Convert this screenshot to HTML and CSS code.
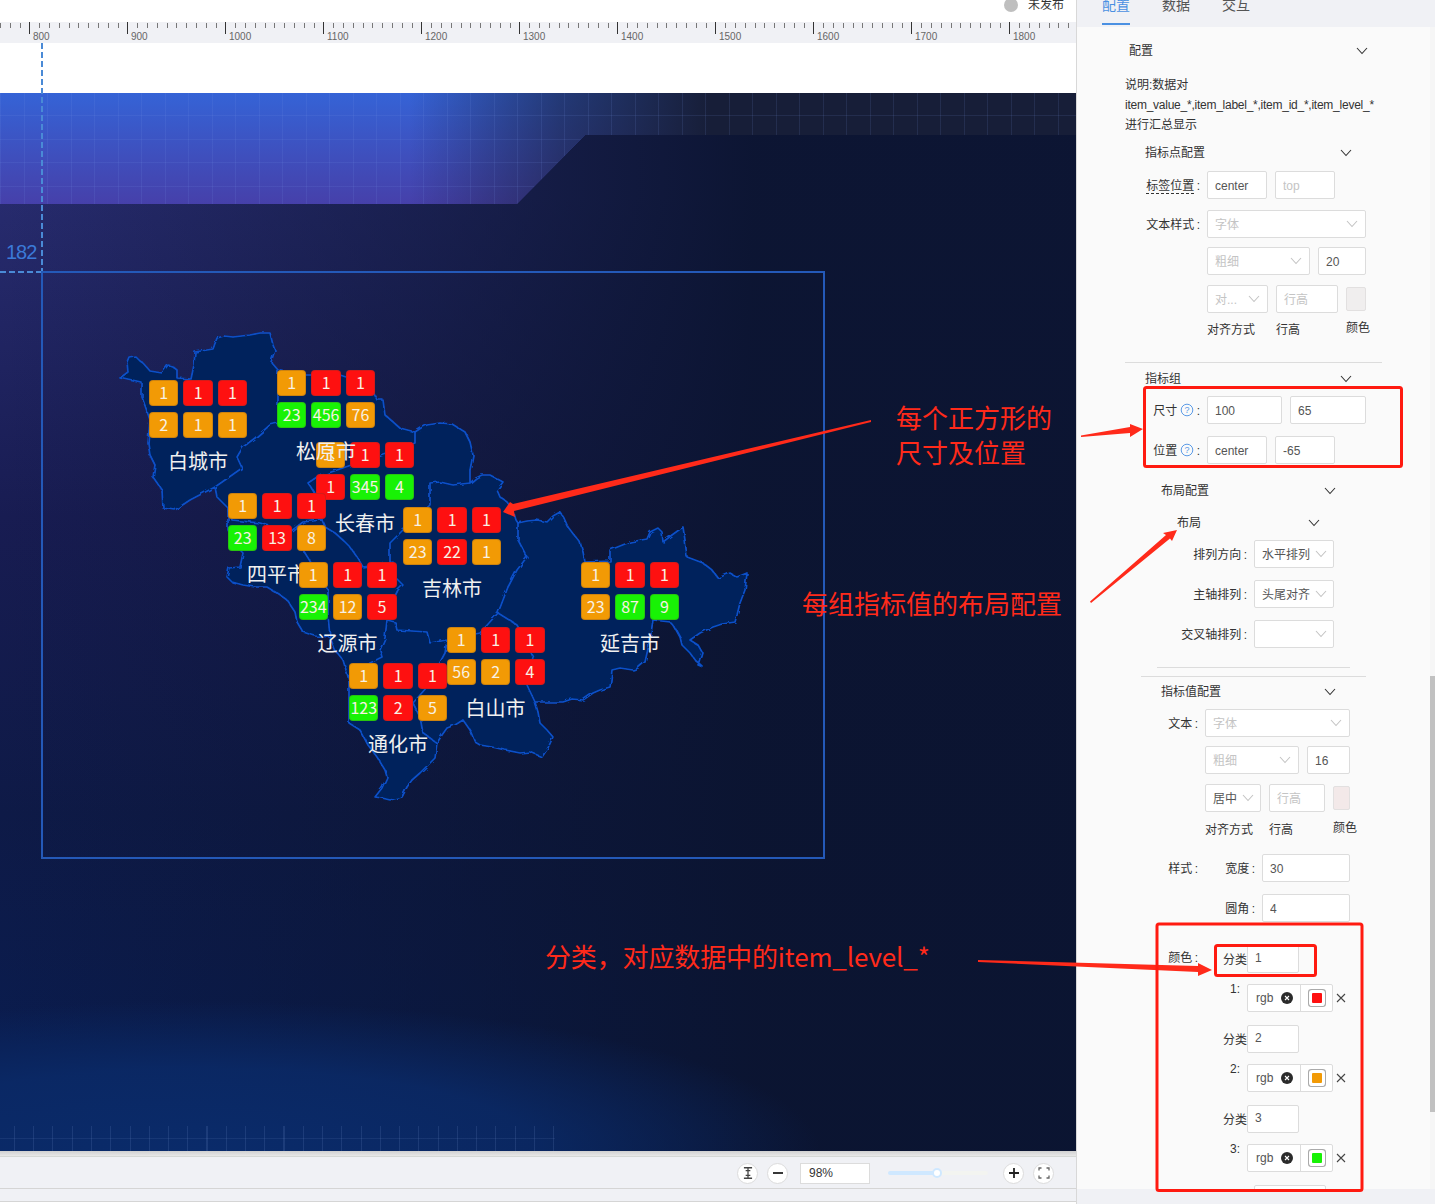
FILE: index.html
```html
<!DOCTYPE html>
<html lang="zh-CN">
<head>
    <meta charset="UTF-8">
    <title>大屏配置</title>
    <link rel="stylesheet" href="styles.css">
</head>
<body>

<svg width="0" height="0" class="defs">
    <defs>
        <symbol id="chev" viewBox="0 0 12 8"><polyline points="1,1 6,6.5 11,1" fill="none" stroke="currentColor" stroke-width="1.1"/></symbol>
        <symbol id="help" viewBox="0 0 14 14"><circle cx="7" cy="7" r="5.8" fill="none" stroke="#5b9be6" stroke-width="1"/><text x="7" y="10" text-anchor="middle" font-size="9" fill="#5b9be6">?</text></symbol>
        <symbol id="clear" viewBox="0 0 12 12"><circle cx="6" cy="6" r="6" fill="#2b2b2b"/><path d="M4 4l4 4M8 4l-4 4" stroke="#fff" stroke-width="1.1"/></symbol>
        <symbol id="close" viewBox="0 0 10 10"><path d="M1 1l8 8M9 1l-8 8" stroke="#444" stroke-width="1.1"/></symbol>
        <filter id="rough" x="-5%" y="-5%" width="110%" height="110%">
            <feTurbulence type="fractalNoise" baseFrequency="0.13" numOctaves="2" seed="4"/>
            <feDisplacementMap in="SourceGraphic" scale="4"/>
        </filter>
    </defs>
</svg>

<div class="main">
    <div class="topbar">
        <span class="status-dot"></span>
        <span class="status-text">未发布</span>
    </div>

    <div class="ruler">
        <div class="mark">800</div>
        <div class="mark">900</div>
        <div class="mark">1000</div>
        <div class="mark">1100</div>
        <div class="mark">1200</div>
        <div class="mark">1300</div>
        <div class="mark">1400</div>
        <div class="mark">1500</div>
        <div class="mark">1600</div>
        <div class="mark">1700</div>
        <div class="mark">1800</div>
    </div>

    <div class="gutter"></div>

    <div class="canvas">
        <div class="banner"></div>
        <div class="floor-grid"></div>

        <div class="guide-v"></div>
        <div class="guide-h"></div>
        <div class="guide-num">182</div>
        <div class="frame"></div>

        <!-- 地图轮廓 -->
        <svg class="map" width="1076" height="1058" viewBox="0 93 1076 1058">
            <g filter="url(#rough)">
            <path class="map-area" d="M120,378 L128,372 L127,362 L129,357 L135,356 L140,361 L143,363 L150,371 L162,373 L168,365 L172,366 L177,370 L177,378 L191,379 L194,365 L195,352 L213,349 L217,338 L224,336 L233,337 L250,335 L260,333 L270,333 L273,345 L275,350 L271,362 L278,370 L300,375 L340,375 L370,385 L377,400 L383,400 L385,415 L392,421 L400,428 L415,432 L421,428 L427,425 L440,423 L452,424 L465,432 L470,442 L473,455 L470,470 L470,483 L476,478 L482,475 L490,475 L503,482 L497,490 L500,497 L507,502 L513,510 L516,520 L518,523 L527,521 L537,520 L547,522 L553,516 L560,512 L564,518 L568,527 L574,535 L580,542 L583,552 L585,562 L610,561 L610,550 L630,542 L647,539 L650,532 L658,528 L662,532 L663,542 L672,535 L683,527 L685,540 L687,557 L703,563 L712,570 L718,578 L730,573 L737,577 L747,573 L745,590 L740,603 L737,615 L735,622 L722,624 L713,627 L700,633 L690,640 L698,645 L702,652 L698,665 L703,667 L695,660 L690,653 L682,645 L680,637 L675,628 L670,622 L653,620 L650,640 L645,662 L638,668 L633,670 L620,668 L612,670 L611,680 L610,687 L600,690 L593,693 L583,700 L572,699 L563,702 L535,702 L538,712 L540,723 L547,730 L553,737 L548,748 L542,757 L530,752 L520,753 L505,750 L492,747 L480,745 L475,742 L470,730 L463,720 L455,725 L447,728 L442,735 L437,743 L435,758 L428,765 L420,773 L412,780 L407,787 L402,797 L390,800 L382,798 L375,797 L382,788 L387,777 L385,770 L377,757 L368,745 L360,730 L349,723 L349,680 L343,660 L335,650 L330,637 L315,636 L303,632 L297,622 L295,612 L287,600 L280,595 L267,587 L255,587 L243,585 L232,582 L227,577 L229,568 L240,567 L243,553 L235,545 L228,530 L228,508 L217,497 L215,487 L190,500 L175,510 L163,508 L162,490 L153,477 L155,465 L150,455 L148,443 L150,420 L142,397 L142,383 Z"/>
            <path class="map-line" d="M278,370 L278,423 L270,425 L255,438 L243,447 L237,457 L242,468 L225,480 L215,487 M228,508 L232,520 L260,523 L290,532 L303,522 L322,520 L325,527 L335,533 L343,540 L350,547 L357,557 L363,567 L393,562 L395,577 L403,585 L398,590 L388,610 L387,620 L395,622 L397,630 L427,632 L430,643 L447,640 L480,633 L498,613 L503,600 L508,587 L517,570 L527,557 L518,540 L518,523 M415,432 L415,443 L380,455 L317,477 L308,483 L313,490 L322,505 L322,520 M470,483 L453,485 L440,482 L430,483 L430,505 L403,530 L390,543 L390,562 M300,545 L328,590 L328,615 L330,637 M387,620 L385,638 L380,650 L382,657 L370,663 L349,680 M447,640 L445,653 L427,687 L413,703 L420,717 L423,733 L437,743 M498,613 L517,625 L525,640 L533,657 L530,672 L527,685 L535,702"/>
            </g>
        </svg>

        <div class="pin pin-baicheng">
            <div class="cells">
                <span class="cell orange">1</span><span class="cell red">1</span><span class="cell red">1</span>
                <span class="cell orange">2</span><span class="cell orange">1</span><span class="cell orange">1</span>
            </div>
            <div class="pin-name">白城市</div>
        </div>
        <div class="pin pin-changchun">
            <div class="cells">
                <span class="cell orange">1</span><span class="cell red">1</span><span class="cell red">1</span>
                <span class="cell red">1</span><span class="cell green">345</span><span class="cell green">4</span>
            </div>
            <div class="pin-name">长春市</div>
        </div>
        <div class="pin pin-songyuan">
            <div class="cells">
                <span class="cell orange">1</span><span class="cell red">1</span><span class="cell red">1</span>
                <span class="cell green">23</span><span class="cell green">456</span><span class="cell orange">76</span>
            </div>
            <div class="pin-name">松原市</div>
        </div>
        <div class="pin pin-siping">
            <div class="cells">
                <span class="cell orange">1</span><span class="cell red">1</span><span class="cell red">1</span>
                <span class="cell green">23</span><span class="cell red">13</span><span class="cell orange">8</span>
            </div>
            <div class="pin-name">四平市</div>
        </div>
        <div class="pin pin-jilin">
            <div class="cells">
                <span class="cell orange">1</span><span class="cell red">1</span><span class="cell red">1</span>
                <span class="cell orange">23</span><span class="cell red">22</span><span class="cell orange">1</span>
            </div>
            <div class="pin-name">吉林市</div>
        </div>
        <div class="pin pin-liaoyuan">
            <div class="cells">
                <span class="cell orange">1</span><span class="cell red">1</span><span class="cell red">1</span>
                <span class="cell green">234</span><span class="cell orange">12</span><span class="cell red">5</span>
            </div>
            <div class="pin-name">辽源市</div>
        </div>
        <div class="pin pin-tonghua">
            <div class="cells">
                <span class="cell orange">1</span><span class="cell red">1</span><span class="cell red">1</span>
                <span class="cell green">123</span><span class="cell red">2</span><span class="cell orange">5</span>
            </div>
            <div class="pin-name">通化市</div>
        </div>
        <div class="pin pin-baishan">
            <div class="cells">
                <span class="cell orange">1</span><span class="cell red">1</span><span class="cell red">1</span>
                <span class="cell orange">56</span><span class="cell orange">2</span><span class="cell red">4</span>
            </div>
            <div class="pin-name">白山市</div>
        </div>
        <div class="pin pin-yanji">
            <div class="cells">
                <span class="cell orange">1</span><span class="cell red">1</span><span class="cell red">1</span>
                <span class="cell orange">23</span><span class="cell green">87</span><span class="cell green">9</span>
            </div>
            <div class="pin-name">延吉市</div>
        </div>

        <div class="note-red note-size">每个正方形的<br>尺寸及位置</div>
        <div class="note-red note-layout">每组指标值的布局配置</div>
        <div class="note-red note-level">分类，对应数据中的item_level_*</div>
    </div>

    <div class="canvas-shadow"></div>

    <div class="statusbar">
        <span class="round-btn">
            <svg width="14" height="14" viewBox="0 0 12 12"><path d="M2.5 1.5h7M2.5 10.5h7M6 1.5v9M4 4h4M4 8h4" stroke="#444" stroke-width="1.1" fill="none"/></svg>
        </span>
        <span class="round-btn btn-minus">
            <svg width="12" height="12" viewBox="0 0 12 12"><path d="M1 6h10" stroke="#222" stroke-width="1.8"/></svg>
        </span>
        <span class="zoom-value">98%</span>
        <span class="slider"><span class="slider-fill"></span><span class="slider-thumb"></span></span>
        <span class="round-btn btn-plus">
            <svg width="12" height="12" viewBox="0 0 12 12"><path d="M1 6h10M6 1v10" stroke="#222" stroke-width="1.8"/></svg>
        </span>
        <span class="round-btn btn-full">
            <svg width="12" height="12" viewBox="0 0 12 12"><path d="M1 3.5V1h2.5M8.5 1H11v2.5M11 8.5V11H8.5M3.5 11H1V8.5" stroke="#666" stroke-width="1.3" fill="none"/></svg>
        </span>
    </div>
    <div class="footbar"></div>
</div>

<div class="panel">
    <div class="tabs">
        <span class="tab active">配置</span>
        <span class="tab">数据</span>
        <span class="tab">交互</span>
    </div>

    <div class="panel-body">
        <div class="coll-head"><span>配置</span><svg class="chev"><use href="#chev"/></svg></div>
        <div class="explain">说明:数据对<br><span class="keys">item_value_*,item_label_*,item_id_*,item_level_*</span><br>进行汇总显示</div>

        <!-- 指标点配置 -->
        <div class="coll mt-6">
            <div class="coll-head"><span>指标点配置</span><svg class="chev"><use href="#chev"/></svg></div>
            <div class="row mt-8">
                <label class="row-label w66"><span class="dashed">标签位置</span>&#8201;:</label>
                <input class="field w60" value="center">
                <input class="field w60" placeholder="top">
            </div>
            <div class="row mt-11">
                <label class="row-label w66">文本样式&#8201;:</label>
                <div class="select w159 dim">字体<svg class="chev-s"><use href="#chev"/></svg></div>
            </div>
            <div class="row mt-9">
                <div class="spacer w66"></div>
                <div class="select w103 dim">粗细<svg class="chev-s"><use href="#chev"/></svg></div>
                <input class="field w48" value="20">
            </div>
            <div class="row mt-10">
                <div class="spacer w66"></div>
                <div class="select w61 dim">对...<svg class="chev-s"><use href="#chev"/></svg></div>
                <input class="field w62" placeholder="行高">
                <span class="swatch"></span>
            </div>
            <div class="captions mt-8">
                <div class="w66"></div>
                <span class="w69">对齐方式</span><span class="w70">行高</span><span class="cap-up">颜色</span>
            </div>
        </div>

        <div class="divider mt-25"></div>

        <!-- 指标组 -->
        <div class="coll mt-4">
            <div class="coll-head"><span>指标组</span><svg class="chev"><use href="#chev"/></svg></div>
            <div class="row mt-7">
                <label class="row-label w66">尺寸<svg class="help"><use href="#help"/></svg>&#8201;:</label>
                <input class="field w75" value="100">
                <input class="field w76" value="65">
            </div>
            <div class="row mt-12">
                <label class="row-label w66">位置<svg class="help"><use href="#help"/></svg>&#8201;:</label>
                <input class="field w60" value="center">
                <input class="field w60" value="-65">
            </div>

            <div class="coll mt-15">
                <div class="coll-head"><span>布局配置</span><svg class="chev"><use href="#chev"/></svg></div>
                <div class="coll mt-10">
                    <div class="coll-head"><span>布局</span><svg class="chev"><use href="#chev"/></svg></div>
                    <div class="row mt-7">
                        <label class="row-label w81">排列方向&#8201;:</label>
                        <div class="select w80 on">水平排列<svg class="chev-s tight"><use href="#chev"/></svg></div>
                    </div>
                    <div class="row mt-12">
                        <label class="row-label w81">主轴排列&#8201;:</label>
                        <div class="select w80 on">头尾对齐<svg class="chev-s tight"><use href="#chev"/></svg></div>
                    </div>
                    <div class="row mt-12">
                        <label class="row-label w81">交叉轴排列&#8201;:</label>
                        <div class="select w80"><svg class="chev-s tight"><use href="#chev"/></svg></div>
                    </div>
                </div>
                <div class="divider mt-19"></div>
            </div>
            <div class="divider mt-8"></div>
        </div>

        <!-- 指标值配置 -->
        <div class="coll">
            <div class="coll mt-3">
                <div class="coll-head"><span>指标值配置</span><svg class="chev"><use href="#chev"/></svg></div>
                <div class="row mt-7">
                    <label class="row-label w48">文本&#8201;:</label>
                    <div class="select w145 dim">字体<svg class="chev-s"><use href="#chev"/></svg></div>
                </div>
                <div class="row mt-9">
                    <div class="spacer w48"></div>
                    <div class="select w94 dim">粗细<svg class="chev-s"><use href="#chev"/></svg></div>
                    <input class="field w43" value="16">
                </div>
                <div class="row mt-10">
                    <div class="spacer w48"></div>
                    <div class="select w56 on">居中<svg class="chev-s tight"><use href="#chev"/></svg></div>
                    <input class="field w56" placeholder="行高">
                    <span class="swatch pink"></span>
                </div>
                <div class="captions mt-9">
                    <div class="w48"></div>
                    <span class="w64">对齐方式</span><span class="w64">行高</span><span class="cap-up">颜色</span>
                </div>
                <div class="row mt-17">
                    <label class="row-label w48">样式&#8201;:</label>
                    <label class="row-label w57">宽度&#8201;:</label>
                    <input class="field w88" value="30">
                </div>
                <div class="row mt-12">
                    <label class="row-label w105">圆角&#8201;:</label>
                    <input class="field w88" value="4">
                </div>
                <div class="color-block mt-23">
                    <label class="row-label w48">颜色&#8201;:</label>
                    <div class="color-list">
                        <div class="level-row">
                            <span class="level-name">分类</span><input class="field w52" value="1">
                        </div>
                        <div class="level-row mt-11">
                            <span class="level-no">1:</span>
                            <div class="color-pick">
                                <span class="color-text">rgb</span><svg class="clear"><use href="#clear"/></svg>
                                <span class="color-box"><i class="red"></i></span>
                            </div>
                            <svg class="remove"><use href="#close"/></svg>
                        </div>
                        <div class="level-row mt-13">
                            <span class="level-name">分类</span><input class="field w52" value="2">
                        </div>
                        <div class="level-row mt-11">
                            <span class="level-no">2:</span>
                            <div class="color-pick">
                                <span class="color-text">rgb</span><svg class="clear"><use href="#clear"/></svg>
                                <span class="color-box"><i class="orange"></i></span>
                            </div>
                            <svg class="remove"><use href="#close"/></svg>
                        </div>
                        <div class="level-row mt-13">
                            <span class="level-name">分类</span><input class="field w52" value="3">
                        </div>
                        <div class="level-row mt-11">
                            <span class="level-no">3:</span>
                            <div class="color-pick">
                                <span class="color-text">rgb</span><svg class="clear"><use href="#clear"/></svg>
                                <span class="color-box"><i class="green"></i></span>
                            </div>
                            <svg class="remove"><use href="#close"/></svg>
                        </div>
                        <div class="level-add mt-13"></div>
                    </div>
                </div>
            </div>
        </div>
    </div>
</div>

<!-- 标注层 -->
<svg class="marks" width="1435" height="1204" viewBox="0 0 1435 1204">
    <polygon points="871,420 513,504 510,502 503,512 515,517 514,511 871,422"/>
    <polygon points="1081,435.5 1130,427 1130,424 1143,429 1130,437 1130,433 1081,437"/>
    <polygon points="1090,601.5 1166,535 1163,533 1177,530 1172,541 1170,538.5 1091,603"/>
    <polygon points="978,960 1198,966 1198,963 1212,970 1198,976 1198,972 978,962"/>
    <rect x="1144.5" y="387.5" width="257" height="79" rx="2"/>
    <rect x="1157" y="924" width="205" height="266.5" rx="2"/>
    <rect x="1215.5" y="945.5" width="100" height="30" rx="2"/>
</svg>

</body>
</html>
```

FILE: styles.css
```css
/* 页面框架 */
* { box-sizing: border-box; }

body {
    position: relative;
    display: flex;
    width: 1435px;
    height: 1204px;
    margin: 0;
    overflow: hidden;
    background: #fff;
    font-family: "Liberation Sans", "Noto Sans CJK SC", sans-serif;
    font-size: 12px;
    color: #333;
}
.defs { position: absolute; }

.main {
    display: flex;
    flex-direction: column;
    width: 1077px;
    height: 1204px;
    border-right: 1px solid #d8d8d8;
}

.topbar {
    display: flex;
    justify-content: flex-end;
    align-items: center;
    height: 22px;
    padding: 0 12px 12px 0;
    overflow: hidden;
}
.status-dot {
    width: 14px;
    height: 14px;
    margin-right: 10px;
    border-radius: 50%;
    background: #bfbfbf;
}
.status-text { line-height: 10px; }

/* 标尺 */
.ruler {
    display: flex;
    height: 21px;
    padding-left: 29px;
    background-color: #f0f1f5;
    background-image: repeating-linear-gradient(90deg, #777 0, #777 1px, transparent 1px, transparent 9.8px);
    background-size: 100% 5px;
    background-position: 0 1px;
    background-repeat: no-repeat;
}
.mark {
    flex: 0 0 98px;
    height: 12px;
    padding: 9px 0 0 3px;
    border-left: 1px solid #333;
    font-size: 10px;
    line-height: 12px;
    color: #666;
    overflow: visible;
}
.gutter { height: 50px; background: #fff; }

/* 画布 */
.canvas {
    position: relative;
    height: 1058px;
    background:
        radial-gradient(ellipse 620px 150px at 200px 100%, #0a2b6a 0%, rgba(10,43,106,.8) 55%, rgba(10,43,106,0) 100%),
        linear-gradient(90deg, rgba(11,20,48,0) 0%, rgba(11,20,48,.5) 40%, rgba(11,20,48,.95) 70%),
        linear-gradient(180deg, #272b6e 10%, #181c52 40%, #0e1a47 68%, #0a1c4e 90%);
}
.banner {
    position: absolute;
    left: 0;
    top: 0;
    width: 1076px;
    height: 111px;
    clip-path: polygon(0 0, 100% 0, 100% 42px, 585px 42px, 517px 100%, 0 100%);
    background:
        repeating-linear-gradient(90deg, rgba(120,150,230,.13) 0, rgba(120,150,230,.13) 1px, transparent 1px, transparent 23.5px),
        repeating-linear-gradient(180deg, transparent 0, transparent 22px, rgba(120,150,230,.12) 22px, rgba(120,150,230,.12) 23px, transparent 23px, transparent 23.5px),
        linear-gradient(90deg, rgba(23,30,56,0) 38%, rgba(23,30,56,.6) 52%, #171e38 66%),
        linear-gradient(180deg, #3563d6, #4640aa);
}
.floor-grid {
    position: absolute;
    left: 0;
    bottom: 0;
    width: 555px;
    height: 25px;
    background:
        linear-gradient(180deg, transparent 12px, rgba(140,170,230,.1) 12px, rgba(140,170,230,.1) 13px, transparent 13px),
        repeating-linear-gradient(90deg, transparent 0, transparent 14px, rgba(140,170,230,.14) 14px, rgba(140,170,230,.14) 15px, transparent 15px, transparent 19.25px);
}

.guide-v {
    position: absolute;
    left: 41px;
    top: -50px;
    width: 1.5px;
    height: 228px;
    background: repeating-linear-gradient(180deg, #4a8ad6 0, #4a8ad6 6px, transparent 6px, transparent 9px);
}
.guide-h {
    position: absolute;
    left: 0;
    top: 178px;
    width: 41px;
    height: 1.5px;
    background: repeating-linear-gradient(90deg, #4a8ad6 0, #4a8ad6 6px, transparent 6px, transparent 9px);
}
.guide-num {
    position: absolute;
    left: 6px;
    top: 147px;
    font-size: 20px;
    line-height: 24px;
    letter-spacing: -1px;
    color: #3b7ad8;
}
.frame {
    position: absolute;
    left: 41px;
    top: 178px;
    width: 784px;
    height: 588px;
    border: 2px solid #2459b8;
}

.map { position: absolute; left: 0; top: 0; }
.map-area { fill: #01215c; stroke: #0a50c8; stroke-width: 1.7; stroke-linejoin: round; }
.map-line { fill: none; stroke: #0a50c8; stroke-width: 1.7; stroke-linejoin: round; }

/* 指标组 */
.pin { position: absolute; width: 98px; font-family: "Noto Sans CJK SC", sans-serif; }
.pin-baicheng { left: 149px; top: 287px; }
.pin-songyuan { left: 277px; top: 277px; }
.pin-changchun { left: 316px; top: 349px; }
.pin-siping { left: 228px; top: 400px; }
.pin-jilin { left: 403px; top: 414px; }
.pin-liaoyuan { left: 298.5px; top: 469px; }
.pin-yanji { left: 581px; top: 469px; }
.pin-baishan { left: 446.5px; top: 534px; }
.pin-tonghua { left: 349px; top: 570px; }

.cells {
    display: grid;
    grid-template-columns: repeat(3, 29.4px);
    grid-auto-rows: 26px;
    column-gap: 5px;
    row-gap: 6px;
}
.cell {
    border: 1px solid rgba(90,60,50,.25);
    border-radius: 4px;
    font-size: 16px;
    line-height: 22px;
    text-align: center;
    color: #f8f1e4;
}
.orange { background: #f29a05; }
.red { background: #fe1010; }
.green { background: #18f205; }
.pin-name {
    margin: 11px -20px 0;
    font-size: 20px;
    line-height: 24px;
    text-align: center;
    color: #f0f0f0;
}

/* 红色标注 */
.note-red {
    position: absolute;
    font-family: "Noto Sans CJK SC", sans-serif;
    font-size: 26px;
    line-height: 35px;
    white-space: nowrap;
    color: #ff2a1a;
}
.note-size { left: 896px; top: 306px; }
.note-layout { left: 802px; top: 492px; }
.note-level { left: 545px; top: 845px; letter-spacing: -.13px; }

.marks { position: absolute; left: 0; top: 0; pointer-events: none; }
.marks polygon { fill: #ff2a1a; }
.marks rect { fill: none; stroke: #ff1a10; stroke-width: 3; }

/* 底部 */
.canvas-shadow {
    height: 6px;
    background: linear-gradient(180deg, #d0d0d0, #e8e8e8);
    border-bottom: 1px solid #d5d8d5;
}
.statusbar {
    display: flex;
    align-items: center;
    height: 32px;
    padding-top: 1px;
    background: #f0f1f5;
    border-bottom: 1px solid #d5d5d5;
}
.round-btn {
    display: flex;
    align-items: center;
    justify-content: center;
    width: 21px;
    height: 21px;
    margin-left: 737px;
    border: 1px solid #dcdcdc;
    border-radius: 50%;
    background: #fff;
}
.btn-minus { margin-left: 9px; }
.btn-plus { margin-left: 15px; }
.btn-full { margin-left: 9px; }
.zoom-value {
    width: 70px;
    height: 21px;
    margin-left: 12px;
    padding-left: 8px;
    border: 1px solid #dcdcdc;
    background: #fff;
    line-height: 19px;
}
.slider {
    position: relative;
    width: 100px;
    height: 4px;
    margin-left: 18px;
    border-radius: 2px;
    background: #f3f4f0;
}
.slider-fill {
    position: absolute;
    left: 0;
    top: 0;
    width: 49px;
    height: 4px;
    border-radius: 2px;
    background: #cfe8ff;
}
.slider-thumb {
    position: absolute;
    left: 44px;
    top: -3px;
    width: 10px;
    height: 10px;
    border: 2px solid #cfe8ff;
    border-radius: 50%;
    background: #fff;
}
.footbar {
    height: 13px;
    background: #f0f1f5;
    border-bottom: 1px solid #d5d5d5;
}

/* 右侧面板 */
.panel {
    display: flex;
    flex-direction: column;
    width: 358px;
    height: 1204px;
    background: #f0f1f5;
}
.tabs {
    display: flex;
    gap: 32px;
    height: 27px;
    padding-left: 25px;
    background: #f0f1f5;
}
.tab {
    height: 25px;
    font-size: 14px;
    line-height: 10px;
    color: #555;
}
.tab.active {
    border-bottom: 2.5px solid #4a90e2;
    color: #4a90e2;
}
.panel-body {
    position: relative;
    height: 1162px;
    padding: 12px 53px 0 48px;
    overflow: hidden;
    background: linear-gradient(90deg, #fafafa 353px, #f6f6f6 353px);
}
.panel-body::after {
    content: "";
    position: absolute;
    left: 353px;
    top: 649px;
    width: 5px;
    height: 436px;
    background: #c1c1c1;
}

.coll { margin: 0 16px; }
.coll-head {
    display: flex;
    justify-content: space-between;
    align-items: center;
    height: 22px;
    padding: 2px 14px 0 4px;
    line-height: 20px;
}
.chev {
    width: 12px;
    height: 8px;
    color: #333;
}
.explain {
    margin-top: 14px;
    line-height: 20px;
    white-space: nowrap;
}
.keys { letter-spacing: -.25px; }
.divider { border-top: 1px solid #dcdcdc; }

.row {
    display: flex;
    align-items: center;
    gap: 8px;
    height: 28px;
}
.row-label {
    flex: none;
    margin-right: -8px;
    padding: 0 7px 2px 0;
    text-align: right;
    white-space: nowrap;
}
.spacer { margin-right: -8px; }
.dashed { border-bottom: 1px dashed #333; }
.help {
    width: 14px;
    height: 14px;
    margin-left: 3px;
    vertical-align: -2px;
}

.field, .select {
    flex: none;
    height: 28px;
    border: 1px solid #dcdcdc;
    border-radius: 2px;
    background: #fff;
    font-family: inherit;
    font-size: 12px;
    color: #555;
}
.field { padding: 2px 7px 0; outline: none; }
.field::placeholder { color: #c4c4c4; }
.select {
    display: flex;
    justify-content: space-between;
    align-items: center;
    padding: 0 7px 2px;
    white-space: nowrap;
}
.select.dim { color: #c4c4c4; }
.chev-s {
    flex: none;
    width: 12px;
    height: 8px;
    margin: 2px 0 0 auto;
    color: #c4c4c4;
}
.chev-s.tight { margin-right: -1px; }
.swatch {
    flex: none;
    width: 20px;
    height: 24px;
    border: 1px solid #e2e0e0;
    border-radius: 2px;
    background: #f0eeee;
}
.swatch.pink { width: 17px; background: #f3e9e9; }

.captions {
    display: flex;
    height: 16px;
    line-height: 18px;
    white-space: nowrap;
}
.captions > * { flex: none; }
.cap-up { margin-top: -2px; }

/* 颜色列表 */
.color-block { display: flex; }
.color-block > .row-label { height: 28px; margin-right: 0; line-height: 26px; }
.color-list { flex: 1; }
.level-row {
    display: flex;
    align-items: center;
    height: 28px;
}
.level-row .field { padding: 0 7px 2px; }
.level-name {
    flex: none;
    width: 42px;
    padding: 0 0 2px 18px;
    white-space: nowrap;
}
.level-no {
    flex: none;
    align-self: flex-start;
    width: 42px;
    padding-right: 7px;
    line-height: 10px;
    text-align: right;
}
.color-pick {
    display: flex;
    align-items: center;
    width: 86px;
    height: 28px;
    border: 1px solid #dcdcdc;
    border-radius: 2px;
    background: #fff;
}
.color-text { width: 18px; margin-left: 8px; color: #555; }
.clear { width: 12px; height: 12px; margin-left: 7px; }
.color-box {
    display: flex;
    align-items: center;
    justify-content: center;
    width: 32px;
    height: 26px;
    margin-left: auto;
    border-left: 1px solid #dcdcdc;
}
.color-box i {
    display: block;
    width: 10px;
    height: 10px;
    box-shadow: 0 0 0 3px #fff, 0 0 0 4px #aaa;
    border-radius: 1px;
}
.remove { width: 10px; height: 10px; margin-left: 3px; }
.level-add {
    width: 72px;
    height: 28px;
    margin-left: 49px;
    border: 1px solid #dcdcdc;
    border-radius: 2px;
    background: #fff;
}

/* 宽度 */
.w43 { width: 43px; }
.w48 { width: 48px; flex: none; }
.w52 { width: 52px; }
.w56 { width: 56px; }
.w57 { width: 57px; }
.w60 { width: 60px; }
.w61 { width: 61px; }
.w62 { width: 62px; }
.w64 { width: 64px; }
.w66 { width: 66px; flex: none; }
.w69 { width: 69px; }
.w70 { width: 70px; }
.w75 { width: 75px; }
.w76 { width: 76px; }
.w80 { width: 80px; }
.w81 { width: 81px; }
.w88 { width: 88px; }
.w94 { width: 94px; }
.w103 { width: 103px; }
.w105 { width: 105px; }
.w145 { width: 145px; }
.w159 { width: 159px; }

/* 间距 */
.mt-3 { margin-top: 3px; }
.mt-4 { margin-top: 4px; }
.mt-6 { margin-top: 6px; }
.mt-7 { margin-top: 7px; }
.mt-8 { margin-top: 8px; }
.mt-9 { margin-top: 9px; }
.mt-10 { margin-top: 10px; }
.mt-11 { margin-top: 11px; }
.mt-12 { margin-top: 12px; }
.mt-13 { margin-top: 13px; }
.mt-15 { margin-top: 15px; }
.mt-17 { margin-top: 17px; }
.mt-19 { margin-top: 19px; }
.mt-23 { margin-top: 23px; }
.mt-25 { margin-top: 25px; }
```
